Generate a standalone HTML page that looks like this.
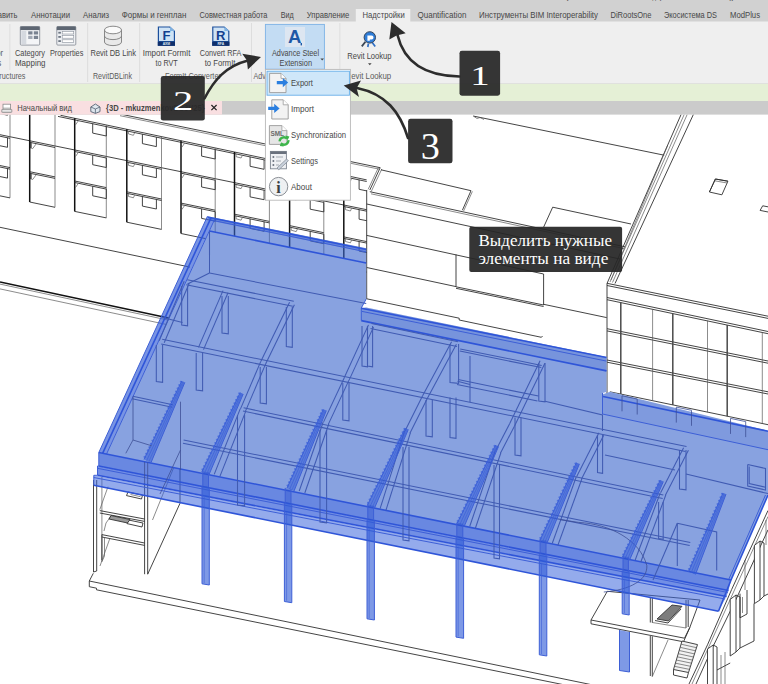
<!DOCTYPE html>
<html lang="ru"><head><meta charset="utf-8"><title>Revit Advance Steel Export</title>
<style>
html,body{margin:0;padding:0;background:#fff;}
body{width:768px;height:684px;overflow:hidden;}
svg{display:block;}
text{font-family:"Liberation Sans",sans-serif;}
.t{fill:#474747;}
.tg{fill:#5c5c5c;}
.ser{font-family:"Liberation Serif",serif;fill:#fff;}
.k{fill:none;stroke:#303030;stroke-width:0.9;}
.k2{fill:none;stroke:#111;stroke-width:1.5;}
.k3{fill:none;stroke:#4a4a4a;stroke-width:1.5;}
.kl{fill:none;stroke:#5a5a5a;stroke-width:0.7;}
.kw{fill:#fff;stroke:#303030;stroke-width:0.9;}
.b{fill:none;stroke:#3d5fd6;stroke-width:1;}
.b2{fill:none;stroke:#2f55d8;stroke-width:1.6;}
.bl{fill:none;stroke:#5570c8;stroke-width:0.8;}
.bs{fill:none;stroke:#3d4f96;stroke-width:0.8;}
.bd{fill:none;stroke:#405bb2;stroke-width:1.05;}
</style></head><body>
<svg width="768" height="684" viewBox="0 0 768 684">
<rect x="0" y="0" width="768" height="684" fill="#fff"/>
<g id="drawing" clip-path="url(#clipdraw)">
<defs><clipPath id="clipdraw"><rect x="0" y="114.6" width="768" height="570"/></clipPath></defs>
<polyline class="k" points="120.0,114.0 380.2,167.7" />
<polyline class="kl" points="120.0,115.7 379.4,169.2" />
<polyline class="k" points="60.5,115.3 366.7,179.9" />
<polyline class="k" points="58.0,116.4 366.7,181.5" />
<polyline class="k" points="0.0,134.7 366.7,209.7" />
<polyline class="k2" points="-20.0,114.0 -20.0,191.7" />
<polyline class="kl" points="10.0,114.0 10.0,197.9" />
<polyline class="k" points="-20.0,132.1 10.0,138.3" />
<polyline class="k" points="-20.0,162.9 10.0,169.1" />
<polyline class="k" points="-20.0,161.4 10.0,167.6" />
<polyline class="k" points="-20.0,191.7 10.0,197.9" />
<polyline class="k" points="-6.1,102.8 -6.1,112.3 7.5,115.2 7.5,105.7" />
<polyline class="k" points="-6.1,135.0 -6.1,144.5 7.5,147.3 7.5,137.8" />
<polyline class="k" points="-6.1,165.8 -6.1,175.3 7.5,178.1 7.5,168.6" />
<polyline class="kl" points="-19.2,137.1 -16.6,133.3" />
<polyline class="kl" points="-19.2,167.9 -16.6,164.1" />
<polyline class="k2" points="29.7,114.0 29.7,202.0" />
<polyline class="kl" points="55.0,114.2 55.0,207.3" />
<polyline class="k" points="29.7,142.3 55.0,147.5" />
<polyline class="k" points="29.7,173.2 55.0,178.4" />
<polyline class="k" points="29.7,171.7 55.0,176.9" />
<polyline class="k" points="29.7,202.0 55.0,207.3" />
<polyline class="kl" points="31.5,142.3 31.5,148.3 32.7,148.6 36.0,144.1" />
<polyline class="k" points="30.6,141.8 30.6,148.3" />
<polyline class="kl" points="31.5,173.2 31.5,179.2 32.7,179.5 36.0,175.0" />
<polyline class="k" points="30.6,172.7 30.6,179.2" />
<polyline class="k2" points="74.7,118.3 74.7,211.4" />
<polyline class="kl" points="106.3,125.0 106.3,217.9" />
<polyline class="k" points="74.7,151.5 106.3,158.0" />
<polyline class="k" points="74.7,182.5 106.3,189.1" />
<polyline class="k" points="74.7,181.0 106.3,187.6" />
<polyline class="k" points="74.7,211.4 106.3,217.9" />
<polyline class="k" points="92.7,123.6 92.7,133.1 106.3,136.0 106.3,126.5" />
<polyline class="k" points="92.7,155.2 92.7,164.7 106.3,167.5 106.3,158.0" />
<polyline class="k" points="92.7,186.3 92.7,195.8 106.3,198.6 106.3,189.1" />
<polyline class="kl" points="75.5,124.8 78.1,121.1" />
<polyline class="kl" points="75.5,156.5 78.1,152.7" />
<polyline class="kl" points="75.5,187.5 78.1,183.7" />
<polyline class="k2" points="126.8,129.3 126.8,222.2" />
<polyline class="kl" points="161.5,136.7 161.5,229.4" />
<polyline class="k" points="126.8,162.2 161.5,169.3" />
<polyline class="k" points="126.8,193.3 161.5,200.5" />
<polyline class="k" points="126.8,191.8 161.5,199.0" />
<polyline class="k" points="126.8,222.2 161.5,229.4" />
<polyline class="k" points="142.4,134.1 142.4,143.6 156.4,146.6 156.4,137.1" />
<polyline class="k" points="142.4,165.3 142.4,174.8 156.4,177.7 156.4,168.2" />
<polyline class="k" points="142.4,196.6 142.4,206.1 156.4,209.0 156.4,199.5" />
<polyline class="kl" points="128.4,131.1 128.4,133.9 133.4,135.3 134.6,132.8" />
<polyline class="kl" points="128.4,162.5 128.4,165.3 133.4,166.6 134.6,164.1" />
<polyline class="kl" points="128.4,193.6 128.4,196.4 133.4,197.8 134.6,195.3" />
<polyline class="k2" points="181.0,140.8 181.0,233.5" />
<polyline class="kl" points="215.2,148.0 215.2,240.6" />
<polyline class="k" points="181.0,173.2 215.2,180.2" />
<polyline class="k" points="181.0,204.6 215.2,211.7" />
<polyline class="k" points="181.0,203.1 215.2,210.2" />
<polyline class="k" points="181.0,233.5 215.2,240.6" />
<polyline class="k" points="201.6,146.6 201.6,156.1 215.2,159.0 215.2,149.5" />
<polyline class="k" points="201.6,177.5 201.6,187.0 215.2,189.7 215.2,180.2" />
<polyline class="k" points="201.6,208.9 201.6,218.4 215.2,221.2 215.2,211.7" />
<polyline class="kl" points="181.8,147.3 184.4,143.5" />
<polyline class="kl" points="181.8,178.2 184.4,174.4" />
<polyline class="kl" points="181.8,209.6 184.4,205.8" />
<polyline class="k2" points="234.5,152.1 234.5,244.6" />
<polyline class="kl" points="269.4,159.4 269.4,251.9" />
<polyline class="k" points="234.5,184.2 269.4,191.3" />
<polyline class="k" points="234.5,215.7 269.4,222.9" />
<polyline class="k" points="234.5,214.2 269.4,221.4" />
<polyline class="k" points="234.5,244.6 269.4,251.9" />
<polyline class="k" points="250.1,156.8 250.1,166.3 264.1,169.3 264.1,159.8" />
<polyline class="k" points="250.1,187.4 250.1,196.9 264.1,199.7 264.1,190.2" />
<polyline class="k" points="250.1,218.9 250.1,228.4 264.1,231.3 264.1,221.8" />
<polyline class="kl" points="236.1,153.9 236.1,156.7 241.1,158.0 242.3,155.5" />
<polyline class="kl" points="236.1,184.5 236.1,187.3 241.1,188.6 242.3,186.1" />
<polyline class="kl" points="236.1,216.0 236.1,218.8 241.1,220.2 242.3,217.6" />
<polyline class="k2" points="289.6,163.7 289.6,256.1" />
<polyline class="kl" points="323.8,170.9 323.8,263.2" />
<polyline class="k" points="289.6,195.4 323.8,202.4" />
<polyline class="k" points="289.6,227.1 323.8,234.2" />
<polyline class="k" points="289.6,225.6 323.8,232.7" />
<polyline class="k" points="289.6,256.1 323.8,263.2" />
<polyline class="k" points="310.2,169.5 310.2,179.0 323.8,181.9 323.8,172.4" />
<polyline class="k" points="310.2,199.7 310.2,209.2 323.8,211.9 323.8,202.4" />
<polyline class="k" points="310.2,231.4 310.2,240.9 323.8,243.7 323.8,234.2" />
<polyline class="kl" points="291.2,165.5 291.2,168.3 296.2,169.7 297.4,167.1" />
<polyline class="kl" points="291.2,195.7 291.2,198.5 296.2,199.9 297.4,197.3" />
<polyline class="kl" points="291.2,227.4 291.2,230.2 296.2,231.6 297.4,229.0" />
<polyline class="k2" points="343.8,175.1 343.8,267.3" />
<polyline class="k" points="343.8,206.5 366.7,211.2" />
<polyline class="k" points="343.8,238.4 366.7,243.1" />
<polyline class="k" points="343.8,236.9 366.7,241.6" />
<polyline class="k" points="343.8,267.3 366.7,272.1" />
<polyline class="k" points="359.1,179.8 359.1,189.3 366.7,190.9" />
<polyline class="k" points="359.1,209.7 359.1,219.2 366.7,220.7" />
<polyline class="k" points="359.1,241.6 359.1,251.1 366.7,252.6" />
<polyline class="kl" points="345.4,176.9 345.4,179.7 350.4,181.1 351.6,178.6" />
<polyline class="kl" points="345.4,206.8 345.4,209.6 350.4,211.0 351.6,208.4" />
<polyline class="kl" points="345.4,238.7 345.4,241.5 350.4,242.8 351.6,240.3" />
<polyline class="k" points="0.0,227.3 190.0,267.1" />
<polyline class="k2" points="0.0,281.9 172.0,318.7" />
<polyline class="kl" points="0.0,284.1 168.0,320.1" />
<polyline class="kl" points="0.0,288.9 166.0,324.4" />
<polyline class="k" points="380.2,167.7 369.8,190.0" />
<polyline class="kl" points="378.6,167.2 368.2,189.3" />
<polyline class="kl" points="381.8,169.0 371.2,191.6" />
<polyline class="k" points="366.7,190.0 366.7,299.0" />
<polyline class="k" points="381.0,169.8 471.0,190.7" />
<polyline class="k" points="471.0,190.7 462.4,210.2" />
<polyline class="kl" points="472.4,191.4 463.6,211.0" />
<polyline class="k" points="369.8,191.7 625.0,246.8" />
<polyline class="kl" points="371.0,193.8 624.0,248.6" />
<polyline class="k" points="366.7,204.0 620.0,259.0" />
<polyline class="k" points="366.7,235.4 543.6,274.0" />
<polyline class="k" points="543.6,274.0 543.6,305.0" />
<polyline class="k" points="456.0,254.5 456.0,286.8" />
<polyline class="k" points="366.7,267.5 456.0,286.6" />
<polyline class="k" points="456.0,286.8 543.6,305.0" />
<polyline class="k" points="456.0,288.3 543.6,306.5" />
<polyline class="k" points="543.6,304.3 606.7,317.6" />
<polyline class="k" points="366.7,298.8 459.2,318.2 459.2,320.0 541.4,337.3 542.5,336.0" />
<polyline class="k" points="543.6,227.2 552.7,207.2 631.0,224.0" />
<polyline class="k" points="473.1,116.0 664.2,155.2" />
<polyline class="kl" points="474.0,116.5 477.0,118.5 480.0,117.5 484.0,119.5" />
<polyline class="k" points="681.3,114.0 607.0,283.5" />
<polyline class="kl" points="684.4,114.0 610.0,282.0" />
<polyline class="kl" points="687.4,114.0 612.5,282.5" />
<polyline class="k" points="693.6,114.0 615.0,283.5" />
<polyline class="kl" points="667.5,145.8 611.0,280.0" />
<polygon class="kw" points="709.4,192.0 715.4,179.0 727.9,181.2 721.9,194.8" />
<polyline class="kl" points="714.6,180.8 727.2,183.0" />
<polyline class="k" points="709.4,192.0 715.4,179.0 727.9,181.2" stroke-width="1.3"/>
<polygon class="kw" points="760.1,210.4 762.7,205.8 772.0,207.6 770.0,212.4" />
<polyline class="k" points="607.0,283.5 607.0,398.5" />
<polyline class="k" points="607.0,283.3 768.0,316.2" />
<polyline class="k" points="607.0,285.5 768.0,318.4" />
<polyline class="k" points="607.0,297.5 768.0,331.5" />
<polyline class="k" points="607.0,299.7 768.0,333.7" />
<polyline class="k" points="607.0,328.7 768.0,361.0" />
<polyline class="k" points="607.0,330.9 768.0,363.2" />
<polyline class="k" points="607.0,360.0 768.0,391.8" />
<polyline class="k" points="607.0,362.2 768.0,394.0" />
<polyline class="k" points="609.9,391.8 768.0,424.7" />
<polyline class="k3" points="620.8,302.4 620.8,394.1" />
<polyline class="kl" points="652.6,309.1 652.6,400.7" />
<polyline class="k3" points="672.8,313.4 672.8,404.9" />
<polyline class="kl" points="707.5,320.7 707.5,412.1" />
<polyline class="k3" points="727.2,324.9 727.2,416.2" />
<polyline class="kl" points="762.3,332.3 762.3,423.5" />
<polyline class="k" points="93.5,480.0 93.5,572.0" />
<polyline class="k" points="96.7,480.0 96.7,571.0" />
<polyline class="kl" points="101.9,477.0 101.9,561.7" />
<polyline class="k" points="144.6,482.5 144.6,574.2" />
<polyline class="k" points="147.7,483.0 147.7,574.2" />
<polyline class="k" points="147.7,574.2 180.0,503.3 180.0,452.0" />
<polyline class="kl" points="180.0,452.0 152.5,520.0" />
<polyline class="k" points="99.8,510.6 144.6,519.0" />
<polyline class="k" points="99.8,513.0 144.6,521.4" />
<polyline class="k" points="101.9,534.6 144.6,543.0" />
<polyline class="k" points="101.9,537.0 144.6,545.4" />
<polyline class="kl" points="108.0,486.7 99.8,509.6" />
<polyline class="kl" points="111.0,516.0 106.0,523.0 104.0,531.0" />
<polyline class="k" points="101.9,534.6 101.9,560.0" />
<polyline class="kl" points="104.5,537.0 104.5,556.0 101.9,561.7" />
<polyline class="kl" points="110.0,538.0 100.0,566.0" />
<polygon class="kw" points="128.0,492.0 142.5,495.2 141.5,499.0 126.5,495.6" />
<polyline class="kl" points="130.5,494.5 140.5,496.7" />
<polygon class="kw" points="128.5,520.0 143.0,523.0 142.0,527.0 127.0,523.6" />
<polygon class="kw" points="111.0,515.5 130.0,519.5 127.5,523.0 109.0,519.0" style="fill:#999"/>
<polyline class="k" points="93.3,573.3 89.3,581.0 592.0,684.8" />
<polyline class="k" points="89.3,581.0 89.3,586.7 96.5,588.2 96.5,589.8 570.0,686.0" />
<polyline class="k" points="93.5,572.0 96.7,571.0" />
<polygon class="kw" points="607.3,591.3 591.0,620.0 591.0,623.8 683.5,641.8 689.8,627.5 700.0,600.0" />
<polyline class="k" points="591.0,620.0 684.5,638.2 689.8,627.5" />
<polyline class="k" points="650.3,597.5 650.3,622.5" />
<polyline class="k" points="652.3,597.5 652.3,622.8" />
<polyline class="k" points="650.3,636.0 650.3,676.0" />
<polyline class="k" points="652.3,636.3 652.3,676.5" />
<polyline class="kl" points="652.3,676.5 668.0,640.0" />
<polyline class="k" points="686.0,600.0 686.0,628.0" />
<polyline class="k" points="688.2,600.0 688.2,627.0" />
<polyline class="kl" points="652.3,622.5 686.0,628.0" />
<polygon class="kw" points="672.0,605.0 682.0,606.3 668.5,621.0 657.0,619.0" style="fill:#7d7d7d;stroke:#333"/>
<polyline class="k" points="655.0,620.5 668.0,623.0 681.0,609.0" />
<polygon class="kw" points="682.0,641.0 697.5,644.6 688.5,672.5 673.5,669.5" style="fill:#f2f2f2"/>
<polyline class="kl" points="681.1,644.2 696.5,647.7" />
<polyline class="kl" points="680.1,647.3 695.5,650.8" />
<polyline class="kl" points="679.2,650.5 694.5,653.9" />
<polyline class="kl" points="678.2,653.7 693.5,657.0" />
<polyline class="kl" points="677.3,656.8 692.5,660.1" />
<polyline class="kl" points="676.3,660.0 691.5,663.2" />
<polyline class="kl" points="675.4,663.2 690.5,666.3" />
<polyline class="kl" points="674.4,666.3 689.5,669.4" />
<polyline class="k" points="673.5,669.5 673.5,675.0 687.0,678.0 688.5,672.5" />
<polyline class="k" points="768.0,510.5 731.7,589.4 707.5,644.8 689.0,684.0" />
<polyline class="k" points="768.0,529.8 736.0,599.4 711.8,649.0 696.0,684.0" />
<polyline class="kl" points="768.0,516.5 734.0,591.0 692.0,684.0" />
<polygon class="kw" points="754.4,545.4 760.0,541.0 760.0,600.0 754.4,603.6" />
<polyline class="k" points="760.0,541.0 764.0,543.0 764.0,596.0 760.0,600.0" />
<polygon class="kw" points="730.2,599.4 736.0,595.0 736.0,652.0 730.2,656.0" />
<polyline class="k" points="736.0,595.0 740.0,597.0 740.0,648.0 736.0,652.0" />
<polygon class="kw" points="707.5,649.0 713.2,645.0 713.2,686.0 707.5,686.0" />
<polyline class="k" points="713.2,645.0 717.0,647.0 717.0,686.0" />
<polyline class="k" points="764.0,596.0 768.0,594.0" />
<polyline class="k" points="740.0,593.7 740.0,617.8 747.0,614.0 747.0,590.0" />
<polyline class="kl" points="742.5,597.0 742.5,613.0" />
<polyline class="k" points="740.0,648.0 754.0,641.0 754.0,603.6" />
<polyline class="k" points="717.0,670.0 730.2,663.0" />
<polyline class="kl" points="721.0,655.0 721.0,684.0" />
<polyline class="kl" points="725.0,652.0 725.0,684.0" />
<polyline class="kl" points="745.0,560.0 745.0,590.0" />
<polyline class="kl" points="766.0,520.0 766.0,545.0" />
<polygon class="bf" points="209.5,231.0 366.2,262.8 366.2,299.0 361.3,308.0 366.2,307.5 606.5,356.9 606.5,392.0 602.5,393.0 603.4,394.2 609.9,391.8 768.0,430.7 768.0,495.0 731.0,580.0 106.5,454.1 209.5,230.0" fill="#88a2e0"/>
<polygon class="bf" points="207.5,216.2 366.2,248.3 366.2,262.8 209.5,231.0 209.5,230.0 215.0,218.0" fill="#3964cb" fill-opacity="0.6"/>
<polygon class="bf" points="98.8,452.5 731.0,580.0 728.5,590.5 98.8,466.0" fill="#2a55d4" fill-opacity="0.7"/>
<polygon class="bf" points="97.5,466.0 728.5,590.5 726.5,596.5 97.5,475.3" fill="#2f5ad8" fill-opacity="0.68"/>
<polygon class="bf" points="93.8,475.3 726.5,596.5 718.5,611.2 93.8,485.2" fill="#3d66dc" fill-opacity="0.55"/>
<polygon class="bf" points="207.5,216.2 366.2,248.3 366.2,252.3 209.5,220.5" fill="#2f58cc" fill-opacity="0.35"/>
<polyline class="b2" points="207.9,217.2 366.2,249.5" stroke-width="2"/>
<polyline class="b" points="209.3,219.7 366.2,251.9" />
<polyline class="b2" points="209.5,231.0 366.2,263.0" />
<polyline class="bd" points="209.5,231.0 209.5,273.0" />
<polyline class="bd" points="209.5,273.0 366.2,303.5" />
<polyline class="bd" points="209.5,273.0 187.5,284.0" />
<polygon class="bf" points="207.5,216.2 98.8,452.5 106.5,454.1 215.0,218.0" fill="#325cd6" fill-opacity="0.66"/>
<polyline class="b" points="207.5,216.2 98.8,452.5" />
<polyline class="b2" points="211.3,217.2 102.6,453.3" />
<polyline class="b" points="215.0,218.5 106.5,454.1" />
<polygon class="bf" points="361.3,308.0 366.2,307.5 606.5,356.9 606.5,370.9 361.3,320.6" fill="#2f58cc" fill-opacity="0.18"/>
<polyline class="b" points="361.3,308.0 366.2,299.0" />
<polyline class="b" points="361.3,308.0 361.3,320.6" />
<polyline class="b2" points="361.3,308.2 606.5,357.5" />
<polyline class="b" points="362.0,311.4 606.5,361.1" />
<polyline class="b2" points="361.3,320.6 606.5,370.9" />
<polygon class="bf" points="602.5,393.0 609.9,392.8 768.0,430.7 768.0,449.7 602.5,414.0" fill="#2f58cc" fill-opacity="0.1"/>
<polyline class="b" points="602.5,393.0 602.5,414.0" />
<polyline class="b2" points="603.0,396.5 768.0,431.2" />
<polyline class="b" points="602.5,414.0 768.0,449.7" />
<polyline class="bs" points="622.0,411.3 622.0,395.8 637.2,399.0 637.2,414.5" />
<polyline class="bs" points="676.3,422.6 676.3,407.1 691.5,410.3 691.5,425.8" />
<polyline class="bs" points="730.5,433.9 730.5,418.4 745.7,421.6 745.7,437.1" />
<polyline class="b2" points="768.0,495.0 731.0,580.0 718.5,611.2" />
<polyline class="b" points="765.5,495.0 728.5,580.0" />
<polyline class="b2" points="98.8,452.5 731.0,580.0" stroke-width="2.1"/>
<polyline class="b2" points="98.8,466.0 728.5,590.5" stroke-width="2.1"/>
<polyline class="b" points="97.5,468.3 727.8,592.5" />
<polyline class="b2" points="97.5,475.3 726.5,596.5" />
<polyline class="b" points="93.8,477.5 725.0,599.0" />
<polyline class="b2" points="93.8,485.2 718.5,611.2" />
<polyline class="b" points="98.8,452.5 98.8,466.0 97.5,466.0 97.5,475.3 93.8,475.3 93.8,485.2" />
<polyline class="bd" points="186.2,284.7 292.8,306.3" />
<polyline class="bd" points="187.2,279.7 293.8,301.3" />
<polyline class="bd" points="161.2,344.1 685.5,451.4" />
<polyline class="bd" points="162.2,339.3 686.5,446.5" />
<polyline class="bd" points="184.2,281.2 159.2,340.7" />
<polyline class="bd" points="189.2,283.2 164.2,342.7" />
<polyline class="bd" points="223.0,290.6 198.5,347.4" />
<polyline class="bd" points="228.0,292.8 203.5,349.6" />
<polyline class="bd" points="289.6,302.3 260.9,361.3" />
<polyline class="bd" points="294.4,304.7 265.7,363.7" />
<polyline class="bd" points="260.8,361.4 240.5,408.9" />
<polyline class="bd" points="265.8,363.6 245.5,411.1" />
<polyline class="bd" points="368.5,324.9 344.2,377.7" />
<polyline class="bd" points="373.5,327.1 349.2,379.9" />
<polyline class="bd" points="344.3,377.7 323.6,421.9" />
<polyline class="bd" points="349.1,379.9 328.4,424.1" />
<polyline class="bd" points="451.6,341.7 422.6,395.7" />
<polyline class="bd" points="456.4,344.3 427.4,398.3" />
<polyline class="bd" points="422.6,395.8 405.1,430.8" />
<polyline class="bd" points="427.4,398.2 409.9,433.2" />
<polyline class="bd" points="540.1,360.8 509.6,423.8" />
<polyline class="bd" points="544.9,363.2 514.4,426.2" />
<polyline class="bd" points="509.6,423.8 495.6,450.8" />
<polyline class="bd" points="514.4,426.2 500.4,453.2" />
<polyline class="bd" points="598.9,432.8 576.6,476.8" />
<polyline class="bd" points="603.7,435.2 581.4,479.2" />
<polyline class="bd" points="683.6,447.8 660.6,492.8" />
<polyline class="bd" points="688.4,450.2 665.4,495.2" />
<polyline class="bd" points="240.2,408.9 214.2,474.4" />
<polyline class="bd" points="245.8,411.1 219.8,476.6" />
<polyline class="bd" points="323.2,422.0 299.2,491.0" />
<polyline class="bd" points="328.8,424.0 304.8,493.0" />
<polyline class="bd" points="404.6,431.1 380.1,508.6" />
<polyline class="bd" points="410.4,432.9 385.9,510.4" />
<polyline class="bd" points="495.2,451.0 469.7,526.5" />
<polyline class="bd" points="500.8,453.0 475.3,528.5" />
<polyline class="bd" points="576.2,477.0 552.2,543.5" />
<polyline class="bd" points="581.8,479.0 557.8,545.5" />
<polyline class="bd" points="660.2,493.0 635.2,560.0" />
<polyline class="bd" points="665.8,495.0 640.8,562.0" />
<polyline class="bd" points="370.5,328.4 457.0,346.6" />
<polyline class="bd" points="371.5,323.6 458.0,341.8" />
<polyline class="bd" points="459.8,351.1 541.3,367.6" />
<polyline class="bd" points="460.2,348.9 541.7,365.4" />
<polyline class="bd" points="457.0,384.4 537.5,400.9" />
<polyline class="bd" points="458.0,379.6 538.5,396.1" />
<polyline class="bd" points="132.2,398.8 172.2,407.3" />
<polyline class="bd" points="132.8,396.2 172.8,404.7" />
<polyline class="bd" points="243.0,411.1 662.7,498.4" />
<polyline class="bd" points="243.6,407.8 663.3,495.1" />
<polyline class="bd" points="183.0,443.3 689.7,545.5" />
<polyline class="bd" points="183.6,440.1 690.3,542.4" />
<polyline class="bd" points="181.7,286.0 181.7,325.0 187.6,325.8 187.6,286.0" />
<polyline class="bd" points="222.0,296.0 222.0,333.0 228.3,333.8 228.3,296.0" />
<polyline class="bd" points="286.3,307.0 286.3,346.5 292.3,347.3 292.3,307.0" />
<polyline class="bd" points="156.3,345.0 156.3,381.5 162.6,382.3 162.6,345.0" />
<polyline class="bd" points="196.2,353.0 196.2,390.0 202.6,390.8 202.6,353.0" />
<polyline class="bd" points="260.2,367.0 260.2,403.0 266.4,403.8 266.4,367.0" />
<polyline class="bd" points="342.8,383.0 342.8,420.0 349.0,420.8 349.0,383.0" />
<polyline class="bd" points="362.0,326.0 362.0,366.0 367.5,366.8 367.5,326.0" />
<polyline class="bd" points="367.5,326.0 367.5,366.0 372.6,366.8 372.6,326.0" />
<polyline class="bd" points="450.0,344.0 450.0,382.5 458.6,383.3 458.6,344.0" />
<polyline class="bd" points="450.0,397.5 450.0,437.5 456.0,438.3 456.0,397.5" />
<polyline class="bd" points="426.0,400.0 426.0,436.0 432.3,436.8 432.3,400.0" />
<polyline class="bd" points="538.8,363.0 538.8,401.0 545.0,401.8 545.0,363.0" />
<polyline class="bd" points="597.5,435.0 597.5,472.5 602.6,473.3 602.6,435.0" />
<polyline class="bd" points="679.5,450.0 679.5,489.0 686.0,489.8 686.0,450.0" />
<polyline class="bd" points="658.6,502.0 658.6,538.5 663.2,539.3 663.2,502.0" />
<polyline class="bd" points="237.5,415.0 237.5,505.0 244.6,505.8 244.6,415.0" />
<polyline class="bd" points="320.0,430.0 320.0,522.0 326.6,522.8 326.6,430.0" />
<polyline class="bd" points="403.0,447.0 403.0,540.0 409.0,540.8 409.0,447.0" />
<polyline class="bd" points="494.0,465.0 494.0,558.0 499.5,558.8 499.5,465.0" />
<polyline class="bd" points="515.0,417.5 515.0,455.0 521.0,455.8 521.0,417.5" />
<polyline class="bd" points="470.0,356.0 470.0,402.0" />
<polyline class="bd" points="457.5,381.3 470.0,384.5" />
<polyline class="bd" points="545.0,401.3 602.5,415.0 602.5,431.0" />
<polyline class="bd" points="605.0,455.0 675.0,470.0" />
<polyline class="bd" points="686.0,474.0 768.0,493.6" />
<polyline class="bd" points="747.7,464.5 747.7,486.0 765.5,490.0 765.5,468.5 747.7,464.5" />
<polyline class="bd" points="749.2,466.5 749.2,483.5 765.5,487.2" />
<polyline class="bd" points="677.3,523.2 716.7,532.0 716.7,570.5" />
<polyline class="bd" points="677.3,523.2 677.3,566.0" />
<polyline class="bd" points="677.3,523.2 653.0,580.0" />
<polyline class="bd" points="162.5,317.5 182.5,322.5" />
<path class="bs" d="M560 519.5 C 566 520.5, 572 521.5, 578.6 522.4 C 610 524, 640 540, 646.8 565.4 C 648 580, 630 590, 603.8 592"/>
<polygon class="bf" points="181.8,381.0 144.0,459.4 151.0,462.6 184.8,382.4" fill="#2a55d8" fill-opacity="0.5"/>
<polyline class="b" points="181.8,381.0 144.0,459.4" />
<polyline class="b" points="184.8,382.4 151.0,462.6" />
<polyline class="b" points="183.0,381.5 146.7,460.6" stroke-opacity="0.7"/>
<polyline class="b" points="183.9,382.0 148.9,461.6" stroke-opacity="0.55"/>
<path d="M181.4 382.0 l-0.7 -0.3 M179.8 385.3 l-0.7 -0.3 M178.2 388.6 l-0.7 -0.3 M176.6 391.8 l-0.7 -0.3 M175.1 395.1 l-0.7 -0.3 M173.5 398.4 l-0.7 -0.3 M171.9 401.6 l-0.7 -0.3 M170.3 404.9 l-0.7 -0.3 M168.8 408.2 l-0.7 -0.3 M167.2 411.4 l-0.7 -0.3 M165.6 414.7 l-0.7 -0.3 M164.0 418.0 l-0.7 -0.3 M162.5 421.2 l-0.7 -0.3 M160.9 424.5 l-0.7 -0.3 M159.3 427.8 l-0.7 -0.3 M157.7 431.0 l-0.7 -0.3 M156.2 434.3 l-0.7 -0.3 M154.6 437.6 l-0.7 -0.3 M153.0 440.8 l-0.7 -0.3 M151.4 444.1 l-0.7 -0.3 M149.9 447.4 l-0.7 -0.3 M148.3 450.6 l-0.7 -0.3 M146.7 453.9 l-0.7 -0.3 M145.1 457.1 l-0.7 -0.3" stroke="#3b61da" stroke-width="1.8" stroke-linecap="round" fill="none" stroke-opacity="0.7"/>
<polygon class="bf" points="240.2,392.6 201.8,471.9 208.8,475.1 243.2,394.0" fill="#2a55d8" fill-opacity="0.5"/>
<polyline class="b" points="240.2,392.6 201.8,471.9" />
<polyline class="b" points="243.2,394.0 208.8,475.1" />
<polyline class="b" points="241.4,393.1 204.5,473.1" stroke-opacity="0.7"/>
<polyline class="b" points="242.3,393.6 206.7,474.1" stroke-opacity="0.55"/>
<path d="M239.8 393.6 l-0.7 -0.3 M238.2 396.9 l-0.7 -0.3 M236.6 400.2 l-0.7 -0.3 M235.0 403.5 l-0.7 -0.3 M233.4 406.8 l-0.7 -0.3 M231.8 410.1 l-0.7 -0.3 M230.2 413.5 l-0.7 -0.3 M228.6 416.8 l-0.7 -0.3 M227.0 420.1 l-0.7 -0.3 M225.4 423.4 l-0.7 -0.3 M223.8 426.7 l-0.7 -0.3 M222.2 430.0 l-0.7 -0.3 M220.6 433.3 l-0.7 -0.3 M219.0 436.6 l-0.7 -0.3 M217.4 439.9 l-0.7 -0.3 M215.8 443.2 l-0.7 -0.3 M214.2 446.5 l-0.7 -0.3 M212.6 449.8 l-0.7 -0.3 M211.0 453.1 l-0.7 -0.3 M209.4 456.4 l-0.7 -0.3 M207.8 459.7 l-0.7 -0.3 M206.2 463.0 l-0.7 -0.3 M204.6 466.3 l-0.7 -0.3 M203.0 469.6 l-0.7 -0.3" stroke="#3b61da" stroke-width="1.8" stroke-linecap="round" fill="none" stroke-opacity="0.7"/>
<polygon class="bf" points="323.3,409.4 287.0,488.0 294.0,491.0 326.3,410.6" fill="#2a55d8" fill-opacity="0.5"/>
<polyline class="b" points="323.3,409.4 287.0,488.0" />
<polyline class="b" points="326.3,410.6 294.0,491.0" />
<polyline class="b" points="324.4,409.8 289.7,489.1" stroke-opacity="0.7"/>
<polyline class="b" points="325.4,410.3 291.9,490.1" stroke-opacity="0.55"/>
<path d="M322.9 410.3 l-0.7 -0.3 M321.4 413.6 l-0.7 -0.3 M319.9 416.9 l-0.7 -0.3 M318.3 420.2 l-0.7 -0.3 M316.8 423.5 l-0.7 -0.3 M315.3 426.7 l-0.7 -0.3 M313.8 430.0 l-0.7 -0.3 M312.3 433.3 l-0.7 -0.3 M310.8 436.6 l-0.7 -0.3 M309.3 439.8 l-0.7 -0.3 M307.7 443.1 l-0.7 -0.3 M306.2 446.4 l-0.7 -0.3 M304.7 449.7 l-0.7 -0.3 M303.2 452.9 l-0.7 -0.3 M301.7 456.2 l-0.7 -0.3 M300.2 459.5 l-0.7 -0.3 M298.7 462.8 l-0.7 -0.3 M297.2 466.0 l-0.7 -0.3 M295.6 469.3 l-0.7 -0.3 M294.1 472.6 l-0.7 -0.3 M292.6 475.9 l-0.7 -0.3 M291.1 479.1 l-0.7 -0.3 M289.6 482.4 l-0.7 -0.3 M288.1 485.7 l-0.7 -0.3" stroke="#3b61da" stroke-width="1.8" stroke-linecap="round" fill="none" stroke-opacity="0.7"/>
<polygon class="bf" points="405.3,428.1 367.3,505.4 374.3,508.6 408.3,429.5" fill="#2a55d8" fill-opacity="0.5"/>
<polyline class="b" points="405.3,428.1 367.3,505.4" />
<polyline class="b" points="408.3,429.5 374.3,508.6" />
<polyline class="b" points="406.5,428.6 370.0,506.6" stroke-opacity="0.7"/>
<polyline class="b" points="407.4,429.1 372.2,507.6" stroke-opacity="0.55"/>
<path d="M404.9 429.1 l-0.7 -0.3 M403.2 432.5 l-0.7 -0.3 M401.5 435.9 l-0.7 -0.3 M399.9 439.2 l-0.7 -0.3 M398.2 442.6 l-0.7 -0.3 M396.6 445.9 l-0.7 -0.3 M394.9 449.3 l-0.7 -0.3 M393.3 452.7 l-0.7 -0.3 M391.6 456.0 l-0.7 -0.3 M390.0 459.4 l-0.7 -0.3 M388.3 462.7 l-0.7 -0.3 M386.7 466.1 l-0.7 -0.3 M385.0 469.5 l-0.7 -0.3 M383.4 472.8 l-0.7 -0.3 M381.7 476.2 l-0.7 -0.3 M380.1 479.5 l-0.7 -0.3 M378.4 482.9 l-0.7 -0.3 M376.8 486.3 l-0.7 -0.3 M375.1 489.6 l-0.7 -0.3 M373.5 493.0 l-0.7 -0.3 M371.8 496.3 l-0.7 -0.3 M370.2 499.7 l-0.7 -0.3 M368.5 503.1 l-0.7 -0.3" stroke="#3b61da" stroke-width="1.8" stroke-linecap="round" fill="none" stroke-opacity="0.7"/>
<polygon class="bf" points="495.5,445.1 457.1,523.4 464.1,526.6 498.5,446.5" fill="#2a55d8" fill-opacity="0.5"/>
<polyline class="b" points="495.5,445.1 457.1,523.4" />
<polyline class="b" points="498.5,446.5 464.1,526.6" />
<polyline class="b" points="496.7,445.6 459.8,524.6" stroke-opacity="0.7"/>
<polyline class="b" points="497.6,446.1 462.0,525.6" stroke-opacity="0.55"/>
<path d="M495.1 446.1 l-0.7 -0.3 M493.5 449.4 l-0.7 -0.3 M491.9 452.6 l-0.7 -0.3 M490.3 455.9 l-0.7 -0.3 M488.7 459.2 l-0.7 -0.3 M487.1 462.4 l-0.7 -0.3 M485.5 465.7 l-0.7 -0.3 M483.9 468.9 l-0.7 -0.3 M482.3 472.2 l-0.7 -0.3 M480.7 475.5 l-0.7 -0.3 M479.1 478.7 l-0.7 -0.3 M477.5 482.0 l-0.7 -0.3 M475.9 485.3 l-0.7 -0.3 M474.3 488.5 l-0.7 -0.3 M472.7 491.8 l-0.7 -0.3 M471.1 495.0 l-0.7 -0.3 M469.5 498.3 l-0.7 -0.3 M467.9 501.6 l-0.7 -0.3 M466.3 504.8 l-0.7 -0.3 M464.7 508.1 l-0.7 -0.3 M463.1 511.3 l-0.7 -0.3 M461.5 514.6 l-0.7 -0.3 M459.9 517.9 l-0.7 -0.3 M458.3 521.1 l-0.7 -0.3" stroke="#3b61da" stroke-width="1.8" stroke-linecap="round" fill="none" stroke-opacity="0.7"/>
<polygon class="bf" points="576.4,462.7 539.8,540.5 546.8,543.5 579.4,463.9" fill="#2a55d8" fill-opacity="0.5"/>
<polyline class="b" points="576.4,462.7 539.8,540.5" />
<polyline class="b" points="579.4,463.9 546.8,543.5" />
<polyline class="b" points="577.5,463.1 542.5,541.6" stroke-opacity="0.7"/>
<polyline class="b" points="578.5,463.6 544.7,542.6" stroke-opacity="0.55"/>
<path d="M576.0 463.7 l-0.7 -0.3 M574.4 467.1 l-0.7 -0.3 M572.8 470.4 l-0.7 -0.3 M571.2 473.8 l-0.7 -0.3 M569.6 477.2 l-0.7 -0.3 M568.0 480.6 l-0.7 -0.3 M566.4 484.0 l-0.7 -0.3 M564.8 487.4 l-0.7 -0.3 M563.2 490.7 l-0.7 -0.3 M561.6 494.1 l-0.7 -0.3 M560.0 497.5 l-0.7 -0.3 M558.4 500.9 l-0.7 -0.3 M556.9 504.3 l-0.7 -0.3 M555.3 507.7 l-0.7 -0.3 M553.7 511.0 l-0.7 -0.3 M552.1 514.4 l-0.7 -0.3 M550.5 517.8 l-0.7 -0.3 M548.9 521.2 l-0.7 -0.3 M547.3 524.6 l-0.7 -0.3 M545.7 528.0 l-0.7 -0.3 M544.1 531.3 l-0.7 -0.3 M542.5 534.7 l-0.7 -0.3 M540.9 538.1 l-0.7 -0.3" stroke="#3b61da" stroke-width="1.8" stroke-linecap="round" fill="none" stroke-opacity="0.7"/>
<polygon class="bf" points="660.3,480.2 622.5,557.0 629.5,560.2 663.3,481.6" fill="#2a55d8" fill-opacity="0.5"/>
<polyline class="b" points="660.3,480.2 622.5,557.0" />
<polyline class="b" points="663.3,481.6 629.5,560.2" />
<polyline class="b" points="661.5,480.7 625.2,558.2" stroke-opacity="0.7"/>
<polyline class="b" points="662.4,481.2 627.4,559.2" stroke-opacity="0.55"/>
<path d="M659.9 481.2 l-0.7 -0.3 M658.2 484.6 l-0.7 -0.3 M656.6 487.9 l-0.7 -0.3 M654.9 491.2 l-0.7 -0.3 M653.3 494.6 l-0.7 -0.3 M651.6 497.9 l-0.7 -0.3 M650.0 501.3 l-0.7 -0.3 M648.4 504.6 l-0.7 -0.3 M646.7 507.9 l-0.7 -0.3 M645.1 511.3 l-0.7 -0.3 M643.4 514.6 l-0.7 -0.3 M641.8 518.0 l-0.7 -0.3 M640.1 521.3 l-0.7 -0.3 M638.5 524.6 l-0.7 -0.3 M636.8 528.0 l-0.7 -0.3 M635.2 531.3 l-0.7 -0.3 M633.6 534.6 l-0.7 -0.3 M631.9 538.0 l-0.7 -0.3 M630.3 541.3 l-0.7 -0.3 M628.6 544.7 l-0.7 -0.3 M627.0 548.0 l-0.7 -0.3 M625.3 551.3 l-0.7 -0.3 M623.7 554.7 l-0.7 -0.3" stroke="#3b61da" stroke-width="1.8" stroke-linecap="round" fill="none" stroke-opacity="0.7"/>
<polygon class="bf" points="723.0,493.0 688.5,571.6 695.5,574.4 726.0,494.2" fill="#2a55d8" fill-opacity="0.5"/>
<polyline class="b" points="723.0,493.0 688.5,571.6" />
<polyline class="b" points="726.0,494.2 695.5,574.4" />
<polyline class="b" points="724.1,493.5 691.2,572.7" stroke-opacity="0.7"/>
<polyline class="b" points="725.1,493.8 693.4,573.6" stroke-opacity="0.55"/>
<path d="M722.6 494.0 l-0.7 -0.3 M721.1 497.4 l-0.7 -0.3 M719.6 500.9 l-0.7 -0.3 M718.1 504.3 l-0.7 -0.3 M716.6 507.7 l-0.7 -0.3 M715.1 511.1 l-0.7 -0.3 M713.6 514.5 l-0.7 -0.3 M712.1 517.9 l-0.7 -0.3 M710.6 521.3 l-0.7 -0.3 M709.1 524.8 l-0.7 -0.3 M707.6 528.2 l-0.7 -0.3 M706.1 531.6 l-0.7 -0.3 M704.5 535.0 l-0.7 -0.3 M703.0 538.4 l-0.7 -0.3 M701.5 541.8 l-0.7 -0.3 M700.0 545.3 l-0.7 -0.3 M698.5 548.7 l-0.7 -0.3 M697.0 552.1 l-0.7 -0.3 M695.5 555.5 l-0.7 -0.3 M694.0 558.9 l-0.7 -0.3 M692.5 562.3 l-0.7 -0.3 M691.0 565.8 l-0.7 -0.3 M689.5 569.2 l-0.7 -0.3" stroke="#3b61da" stroke-width="1.8" stroke-linecap="round" fill="none" stroke-opacity="0.7"/>
<polygon class="bf" points="202.8,471.3 208.5,472.5 208.5,487.3 202.8,486.3" fill="#2a52d0" fill-opacity="0.4"/>
<polyline class="b" points="202.8,471.3 202.8,486.3" />
<polyline class="b" points="208.5,472.5 208.5,487.3" />
<polygon class="bf" points="202.0,486.3 209.3,487.3 209.3,585.0 202.0,583.8" fill="#2f5ad6" fill-opacity="0.62"/>
<polyline class="b" points="202.0,486.3 202.0,583.8 209.3,585.0 209.3,487.3" />
<polyline class="b" points="204.2,495.3 204.2,583.0" stroke-opacity="0.6"/>
<polygon class="bf" points="285.2,487.9 291.0,489.1 291.0,503.9 285.2,502.9" fill="#2a52d0" fill-opacity="0.4"/>
<polyline class="b" points="285.2,487.9 285.2,502.9" />
<polyline class="b" points="291.0,489.1 291.0,503.9" />
<polygon class="bf" points="284.4,502.9 291.8,503.9 291.8,602.7 284.4,601.5" fill="#2f5ad6" fill-opacity="0.62"/>
<polyline class="b" points="284.4,502.9 284.4,601.5 291.8,602.7 291.8,503.9" />
<polyline class="b" points="286.6,511.9 286.6,600.7" stroke-opacity="0.6"/>
<polygon class="bf" points="367.8,504.6 373.6,505.8 373.6,520.6 367.8,519.6" fill="#2a52d0" fill-opacity="0.4"/>
<polyline class="b" points="367.8,504.6 367.8,519.6" />
<polyline class="b" points="373.6,505.8 373.6,520.6" />
<polygon class="bf" points="367.0,519.6 374.4,520.6 374.4,620.0 367.0,618.8" fill="#2f5ad6" fill-opacity="0.62"/>
<polyline class="b" points="367.0,519.6 367.0,618.8 374.4,620.0 374.4,520.6" />
<polyline class="b" points="369.2,528.6 369.2,618.0" stroke-opacity="0.6"/>
<polygon class="bf" points="456.8,522.6 462.8,523.8 462.8,538.6 456.8,537.6" fill="#2a52d0" fill-opacity="0.4"/>
<polyline class="b" points="456.8,522.6 456.8,537.6" />
<polyline class="b" points="462.8,523.8 462.8,538.6" />
<polygon class="bf" points="456.0,537.6 463.6,538.6 463.6,638.3 456.0,637.1" fill="#2f5ad6" fill-opacity="0.62"/>
<polyline class="b" points="456.0,537.6 456.0,637.1 463.6,638.3 463.6,538.6" />
<polyline class="b" points="458.2,546.6 458.2,636.3" stroke-opacity="0.6"/>
<polygon class="bf" points="540.1,539.4 546.0,540.6 546.0,555.4 540.1,554.4" fill="#2a52d0" fill-opacity="0.4"/>
<polyline class="b" points="540.1,539.4 540.1,554.4" />
<polyline class="b" points="546.0,540.6 546.0,555.4" />
<polygon class="bf" points="539.3,554.4 546.8,555.4 546.8,656.0 539.3,654.8" fill="#2f5ad6" fill-opacity="0.62"/>
<polyline class="b" points="539.3,554.4 539.3,654.8 546.8,656.0 546.8,555.4" />
<polyline class="b" points="541.5,563.4 541.5,654.0" stroke-opacity="0.6"/>
<polygon class="bf" points="623.0,556.1 628.4,557.3 628.4,572.1 623.0,571.1" fill="#2a52d0" fill-opacity="0.4"/>
<polyline class="b" points="623.0,556.1 623.0,571.1" />
<polyline class="b" points="628.4,557.3 628.4,572.1" />
<polygon class="bf" points="622.2,571.1 629.2,572.1 629.2,615.0 622.2,613.8" fill="#2f5ad6" fill-opacity="0.62"/>
<polyline class="b" points="622.2,571.1 622.2,613.8 629.2,615.0 629.2,572.1" />
<polyline class="b" points="624.4,580.1 624.4,613.0" stroke-opacity="0.6"/>
<polygon class="bf" points="619.5,630.0 629.5,632.0 629.5,672.0 619.5,670.5" fill="#2f5ad6" fill-opacity="0.62"/>
<polyline class="b" points="619.5,630.0 619.5,670.5 629.5,672.0 629.5,632.0" />
<g class="bs">
<polyline class="bs" points="180.5,401.7 180.5,470.0" />
<polyline class="bs" points="180.5,450.0 160.0,494.0" />
<polyline class="bs" points="133.0,396.7 133.0,440.0 151.7,445.8" />
<polyline class="bs" points="133.0,440.0 125.8,453.3" />
<polyline class="bs" points="144.6,462.0 144.6,482.5" />
<polyline class="bs" points="147.7,462.5 147.7,483.0" />
</g>
</g>
<rect x="0" y="0" width="768" height="22" fill="#d1d1d1"/>
<text class="t" x="508" y="-0.8" font-size="9" textLength="225" lengthAdjust="spacingAndGlyphs" fill="#333">Autodesk Revit 2025 - [mkuzmenkovDS3V25.rvt - 3D вид: {3D - mkuzmenkovDS3V25}]</text>
<rect x="0" y="21.5" width="768" height="62" fill="#efefef"/>
<rect x="355.8" y="9" width="54.5" height="14" fill="#efefef"/>
<rect x="0" y="83.5" width="768" height="17.5" fill="#e5f0d6"/>
<rect x="0" y="83.2" width="768" height="0.8" fill="#dcdcdc"/>
<rect x="0" y="101" width="768" height="13.6" fill="#cbcbcb"/>
<rect x="0" y="101" width="222" height="13.6" fill="#f9dfe1"/>
<text class="t" x="-14.5" y="18.2" font-size="8.6" text-anchor="start" textLength="32.0" lengthAdjust="spacingAndGlyphs" >Вставить</text>
<text class="t" x="31.0" y="18.2" font-size="8.6" text-anchor="start" textLength="39.0" lengthAdjust="spacingAndGlyphs" >Аннотации</text>
<text class="t" x="83.0" y="18.2" font-size="8.6" text-anchor="start" textLength="26.0" lengthAdjust="spacingAndGlyphs" >Анализ</text>
<text class="t" x="121.8" y="18.2" font-size="8.6" text-anchor="start" textLength="64.5" lengthAdjust="spacingAndGlyphs" >Формы и генплан</text>
<text class="t" x="199.5" y="18.2" font-size="8.6" text-anchor="start" textLength="68.0" lengthAdjust="spacingAndGlyphs" >Совместная работа</text>
<text class="t" x="280.8" y="18.2" font-size="8.6" text-anchor="start" textLength="13.0" lengthAdjust="spacingAndGlyphs" >Вид</text>
<text class="t" x="306.8" y="18.2" font-size="8.6" text-anchor="start" textLength="42.5" lengthAdjust="spacingAndGlyphs" >Управление</text>
<text class="t" x="362.5" y="18.2" font-size="8.6" text-anchor="start" textLength="42.2" lengthAdjust="spacingAndGlyphs" fill="#222">Надстройки</text>
<text class="t" x="417.5" y="18.2" font-size="8.6" text-anchor="start" textLength="49.0" lengthAdjust="spacingAndGlyphs" >Quantification</text>
<text class="t" x="479.0" y="18.2" font-size="8.6" text-anchor="start" textLength="119.0" lengthAdjust="spacingAndGlyphs" >Инструменты BIM Interoperability</text>
<text class="t" x="610.5" y="18.2" font-size="8.6" text-anchor="start" textLength="41.0" lengthAdjust="spacingAndGlyphs" >DiRootsOne</text>
<text class="t" x="664.0" y="18.2" font-size="8.6" text-anchor="start" textLength="53.0" lengthAdjust="spacingAndGlyphs" >Экосистема DS</text>
<text class="t" x="730.0" y="18.2" font-size="8.6" text-anchor="start" textLength="30.0" lengthAdjust="spacingAndGlyphs" >ModPlus</text>
<rect x="9.5" y="24" width="0.8" height="46" fill="#d9d9d9"/>
<rect x="87.3" y="23" width="0.8" height="59" fill="#d9d9d9"/>
<rect x="139.3" y="23" width="0.8" height="59" fill="#d9d9d9"/>
<rect x="251" y="23" width="0.8" height="59" fill="#d9d9d9"/>
<rect x="339.5" y="23" width="0.8" height="59" fill="#d9d9d9"/>
<text class="tg" x="-6.0" y="56.3" font-size="8.6" text-anchor="start" textLength="9.0" lengthAdjust="spacingAndGlyphs" fill="#aaa">for</text>
<text class="tg" x="-3.0" y="65.8" font-size="8.6" text-anchor="start" fill="#aaa">s</text>
<g><rect x="20.3" y="26.5" width="19.4" height="18.6" rx="1" fill="#f4f5f7" stroke="#8d939c" stroke-width="0.9"/><rect x="20.3" y="26.5" width="19.4" height="3.6" fill="#5d6672"/><rect x="21.3" y="31" width="5" height="13" fill="#d5d9df"/><rect x="28.2" y="31.3" width="4.3" height="3.2" fill="#7a8391"/><rect x="33.8" y="31.3" width="4.3" height="3.2" fill="#7a8391"/><rect x="28.2" y="35.8" width="4.3" height="3.2" fill="#a3aab5"/><rect x="33.8" y="35.8" width="4.3" height="3.2" fill="#7a8391"/></g>
<text class="t" x="15.0" y="56.3" font-size="8.6" text-anchor="start" textLength="30.0" lengthAdjust="spacingAndGlyphs" >Category</text>
<text class="t" x="15.0" y="65.8" font-size="8.6" text-anchor="start" textLength="30.5" lengthAdjust="spacingAndGlyphs" >Mapping</text>
<g><rect x="56.8" y="26.5" width="19" height="18.6" rx="1" fill="#eef0f3" stroke="#8d939c" stroke-width="0.9"/><rect x="56.8" y="26.5" width="19" height="3.6" fill="#5d6672"/><rect x="62.2" y="31.4" width="11.5" height="2.6" fill="#fff" stroke="#8a919c" stroke-width="0.6"/><rect x="62.2" y="35.6" width="11.5" height="2.6" fill="#fff" stroke="#8a919c" stroke-width="0.6"/><rect x="62.2" y="39.8" width="11.5" height="2.6" fill="#fff" stroke="#8a919c" stroke-width="0.6"/><rect x="58.3" y="31.8" width="2.6" height="1.8" fill="#6d7682"/><rect x="58.3" y="36" width="2.6" height="1.8" fill="#6d7682"/><rect x="58.3" y="40.2" width="2.6" height="1.8" fill="#6d7682"/></g>
<text class="t" x="50.0" y="56.3" font-size="8.6" text-anchor="start" textLength="33.3" lengthAdjust="spacingAndGlyphs" >Properties</text>
<text class="tg" x="-7.5" y="79.2" font-size="8.6" text-anchor="start" textLength="33.0" lengthAdjust="spacingAndGlyphs" >Structures</text>
<g stroke="#7d7d7d" stroke-width="0.9"><path d="M104.5 30 v12 a8.5 3.6 0 0 0 17 0 v-12 z" fill="#e9e9e9"/><path d="M104.5 36 a8.5 3.6 0 0 0 17 0" fill="none"/><ellipse cx="113" cy="30" rx="8.5" ry="3.8" fill="#fafafa"/></g>
<text class="t" x="90.5" y="56.3" font-size="8.6" text-anchor="start" textLength="45.5" lengthAdjust="spacingAndGlyphs" >Revit DB Link</text>
<text class="tg" x="93.0" y="79.2" font-size="8.6" text-anchor="start" textLength="39.0" lengthAdjust="spacingAndGlyphs" >RevitDBLink</text>
<g><path d="M157.8 26.4 h12.2 l5 4.6 v14.8 h-17.2 z" fill="#1b4f9c"/><path d="M159.0 27.599999999999998 h10.4 l4.4 4 v9.4 h-14.8 z" fill="#cfe3f5"/><path d="M170.0 26.4 l5 4.6 h-5 z" fill="#7fb0e0"/><rect x="157.8" y="41.7" width="17.2" height="4.1" fill="#0f2f6b"/><text x="166.4" y="39.599999999999994" font-size="13" font-weight="bold" text-anchor="middle" fill="#123f8f">F</text><text x="166.4" y="45.3" font-size="3.4" font-weight="bold" text-anchor="middle" fill="#dfe8f5">AXM</text></g>
<text class="t" x="142.7" y="56.3" font-size="8.6" text-anchor="start" textLength="47.8" lengthAdjust="spacingAndGlyphs" >Import FormIt</text>
<text class="t" x="155.5" y="65.8" font-size="8.6" text-anchor="start" textLength="22.2" lengthAdjust="spacingAndGlyphs" >to RVT</text>
<g><path d="M212.2 26.4 h12.2 l5 4.6 v14.8 h-17.2 z" fill="#1b4f9c"/><path d="M213.39999999999998 27.599999999999998 h10.4 l4.4 4 v9.4 h-14.8 z" fill="#cfe3f5"/><path d="M224.39999999999998 26.4 l5 4.6 h-5 z" fill="#7fb0e0"/><rect x="212.2" y="41.7" width="17.2" height="4.1" fill="#0f2f6b"/><text x="220.79999999999998" y="39.599999999999994" font-size="13" font-weight="bold" text-anchor="middle" fill="#123f8f">R</text><text x="220.79999999999998" y="45.3" font-size="3.4" font-weight="bold" text-anchor="middle" fill="#dfe8f5">RFA</text></g>
<text class="t" x="199.7" y="56.3" font-size="8.6" text-anchor="start" textLength="41.6" lengthAdjust="spacingAndGlyphs" >Convert RFA</text>
<text class="t" x="204.7" y="65.8" font-size="8.6" text-anchor="start" textLength="30.8" lengthAdjust="spacingAndGlyphs" >to FormIt</text>
<text class="tg" x="165.0" y="79.2" font-size="8.6" text-anchor="start" textLength="56.0" lengthAdjust="spacingAndGlyphs" >FormIt Converter</text>
<text class="tg" x="253.5" y="79.2" font-size="8.6" text-anchor="start" textLength="46.0" lengthAdjust="spacingAndGlyphs" >Advance Steel</text>
<rect x="265.4" y="24.4" width="59" height="44.8" fill="#c3dcf3" stroke="#7db2e6" stroke-width="0.9"/>
<rect x="285" y="27" width="20" height="20" fill="#dde6f1"/>
<text x="294.6" y="42.5" font-size="18.5" font-weight="bold" text-anchor="middle" fill="#1d58a6">A</text>
<rect x="300.6" y="43" width="1.4" height="2.4" fill="#1d58a6"/>
<text class="t" x="272.0" y="56.3" font-size="8.6" text-anchor="start" textLength="47.0" lengthAdjust="spacingAndGlyphs" >Advance Steel</text>
<text class="t" x="279.5" y="65.8" font-size="8.6" text-anchor="start" textLength="32.5" lengthAdjust="spacingAndGlyphs" >Extension</text>
<path d="M320.4 58.4 h3.6 l-1.8 2 z" fill="#444"/>
<g><path d="M365.4 41.8 l-3.6 4.6" stroke="#3a4654" stroke-width="1.8" fill="none"/><path d="M368.4 43.6 l-0.6 3.4 M372.4 42.8 l2.8 3.8" stroke="#2f6fc4" stroke-width="1.7" fill="none"/><circle cx="369.8" cy="37.4" r="5.7" fill="#2f7dd8" stroke="#33435a" stroke-width="1"/><path d="M367.4 35.6 h4.2 a1.9 1.9 0 0 1 0 3.8 h-1.8 v1.4 h-2.4 z" fill="#fff"/></g>
<text class="t" x="347.3" y="58.6" font-size="8.6" text-anchor="start" textLength="44.2" lengthAdjust="spacingAndGlyphs" >Revit Lookup</text>
<path d="M368 63.2 h3.6 l-1.8 2 z" fill="#444"/>
<text class="tg" x="345.6" y="79.2" font-size="8.6" text-anchor="start" textLength="45.6" lengthAdjust="spacingAndGlyphs" >Revit Lookup</text>
<g fill="none" stroke="#8a8a8a" stroke-width="0.8"><rect x="3" y="104.2" width="7.6" height="8" fill="#fff"/><path d="M3 108.2 h7.6 M1.8 109.6 h10 v2.6 h-10 z" fill="#eee"/></g>
<text class="t" x="17.2" y="111.0" font-size="8.4" text-anchor="start" textLength="54.8" lengthAdjust="spacingAndGlyphs" >Начальный вид</text>
<g><path d="M90.8 107 l4.6 -3 l4.6 3 v4.6 l-4.6 1.8 l-4.6 -1.8 z" fill="#dfe6ee" stroke="#566273" stroke-width="0.9"/><path d="M90.8 107 l4.6 2 l4.6 -2 M95.4 109 v4.2" stroke="#566273" stroke-width="0.8" fill="none"/></g>
<text class="t" x="106.0" y="111.0" font-size="8.4" text-anchor="start" textLength="98.7" lengthAdjust="spacingAndGlyphs" font-weight="bold" fill="#222">{3D - mkuzmenkovDS3V25}</text>
<path d="M211.4 105 l5.2 5.2 M216.6 105 l-5.2 5.2" stroke="#222" stroke-width="1.2" fill="none"/>
<rect x="265.4" y="69.4" width="85" height="130.8" fill="#fff" stroke="#b8b8b8" stroke-width="0.9"/>
<rect x="267" y="71.2" width="82.4" height="24" fill="#cfe7f9" stroke="#66aee8" stroke-width="0.9"/>
<path d="M269.6 73.4 h11.399999999999999 l5 5 v14.2 h-16.4 z" fill="#f3f3f3" stroke="#9a9a9a" stroke-width="0.9"/><path d="M281.0 73.4 v5 h5" fill="#fff" stroke="#9a9a9a" stroke-width="0.8"/>
<path d="M276.8 81.0 h6 v-3 l5.4 4.6 l-5.4 4.6 v-3 h-6 z" fill="#2b7fe0"/>
<text class="t" x="291.0" y="86.2" font-size="8.8" text-anchor="start" textLength="22.0" lengthAdjust="spacingAndGlyphs" >Export</text>
<path d="M271.8 99.8 h11.399999999999999 l5 5 v14.2 h-16.4 z" fill="#f3f3f3" stroke="#9a9a9a" stroke-width="0.9"/><path d="M283.2 99.8 v5 h5" fill="#fff" stroke="#9a9a9a" stroke-width="0.8"/>
<path d="M268.2 106.80000000000001 h6 v-3 l5.4 4.6 l-5.4 4.6 v-3 h-6 z" fill="#2b7fe0"/>
<text class="t" x="291.0" y="112.0" font-size="8.8" text-anchor="start" textLength="23.0" lengthAdjust="spacingAndGlyphs" >Import</text>
<path d="M269.4 125.6 h12.5 l5 5 v13.8 h-17.5 z" fill="#e6e6e6" stroke="#9a9a9a" stroke-width="0.9"/><path d="M281.9 125.6 v5 h5" fill="#fff" stroke="#9a9a9a" stroke-width="0.8"/>
<text x="277.2" y="135.6" font-size="6.4" text-anchor="middle" fill="#6a6a6a" font-weight="bold" textLength="13.5" lengthAdjust="spacingAndGlyphs">SML</text>
<g fill="none" stroke="#3db54a" stroke-width="2.3"><path d="M279.6 141.4 a4.2 4.2 0 0 1 7.4 -2.6"/><path d="M288.4 140.2 a4.2 4.2 0 0 1 -7.4 3"/></g><path d="M285.4 135.6 l4 0.8 l-1.8 3.8 z M283.8 146.6 l-4 -0.6 l1.6 -3.8 z" fill="#3db54a"/>
<text class="t" x="291.0" y="138.0" font-size="8.8" text-anchor="start" textLength="55.0" lengthAdjust="spacingAndGlyphs" >Synchronization</text>
<g><rect x="270.4" y="151.4" width="16" height="17.4" fill="#eef0f3" stroke="#7e8691" stroke-width="0.9"/><rect x="270.4" y="151.4" width="16" height="2.6" fill="#69717d"/><circle cx="273.4" cy="157" r="1" fill="#69717d"/><circle cx="273.4" cy="161" r="1" fill="#69717d"/><circle cx="273.4" cy="165" r="1" fill="#69717d"/><path d="M276 157 h7 M276 161 h5 M276 165 h3" stroke="#9aa1ab" stroke-width="0.9"/><path d="M277 168 l9.6 -9 l1.8 1.8 l-9.6 9 z" fill="#c9d1dc" stroke="#7e8691" stroke-width="0.7"/></g>
<text class="t" x="291.0" y="163.8" font-size="8.8" text-anchor="start" textLength="27.0" lengthAdjust="spacingAndGlyphs" >Settings</text>
<circle cx="278.6" cy="186.6" r="9.2" fill="#eef0f2" stroke="#8b8f95" stroke-width="1"/>
<text x="278.6" y="192.6" font-size="16" font-weight="bold" text-anchor="middle" fill="#3a3d42" style="font-family:'Liberation Serif',serif">i</text>
<text class="t" x="291.0" y="189.6" font-size="8.8" text-anchor="start" textLength="21.0" lengthAdjust="spacingAndGlyphs" >About</text>
<rect x="459.5" y="50.8" width="40.6" height="44.9" rx="2.4" fill="#2a2a2a" fill-opacity="0.95"/>
<text class="ser" transform="translate(479.9,85) scale(1.42,1)" x="0" y="0" font-size="27.4" text-anchor="middle">1</text>
<rect x="160.8" y="76" width="44" height="44.6" rx="2.4" fill="#2a2a2a" fill-opacity="0.95"/>
<text class="ser" transform="translate(183.0,110.1) scale(1.5,1)" x="0" y="0" font-size="27" text-anchor="middle">2</text>
<rect x="408.1" y="118.8" width="44.4" height="44.5" rx="2.4" fill="#2a2a2a" fill-opacity="0.95"/>
<text class="ser" transform="translate(430.2,158.6) scale(1.02,1)" x="0" y="0" font-size="37.5" text-anchor="middle">3</text>
<g fill="none" stroke="#2d2d2d" stroke-width="2.6" stroke-linecap="round"><path d="M204.5 98.5 C 214 80, 226 66, 248 60.5"/><path d="M459.5 76.5 C 425 76, 404 62, 397.5 35"/><path d="M408 138 C 400 112, 386 94, 357 88"/></g>
<g fill="#2d2d2d"><path d="M261 56.9 L242.2 53.7 L246.8 60.2 L247.9 69.4 Z"/><path d="M391.5 22 L389.3 39.4 L396.6 35.6 L405.7 33.2 Z"/><path d="M343.7 85.4 L361 80.5 L356.6 88.3 L359 97 Z"/></g>
<rect x="469.3" y="226.8" width="152.8" height="45.3" rx="2" fill="#262626" fill-opacity="0.93"/>
<text class="ser" x="478.5" y="245.9" font-size="16.4" textLength="133.5" lengthAdjust="spacingAndGlyphs">Выделить нужные</text>
<text class="ser" x="478.5" y="264.4" font-size="16.4" textLength="129.8" lengthAdjust="spacingAndGlyphs">элементы на виде</text>
</svg>
</body></html>
